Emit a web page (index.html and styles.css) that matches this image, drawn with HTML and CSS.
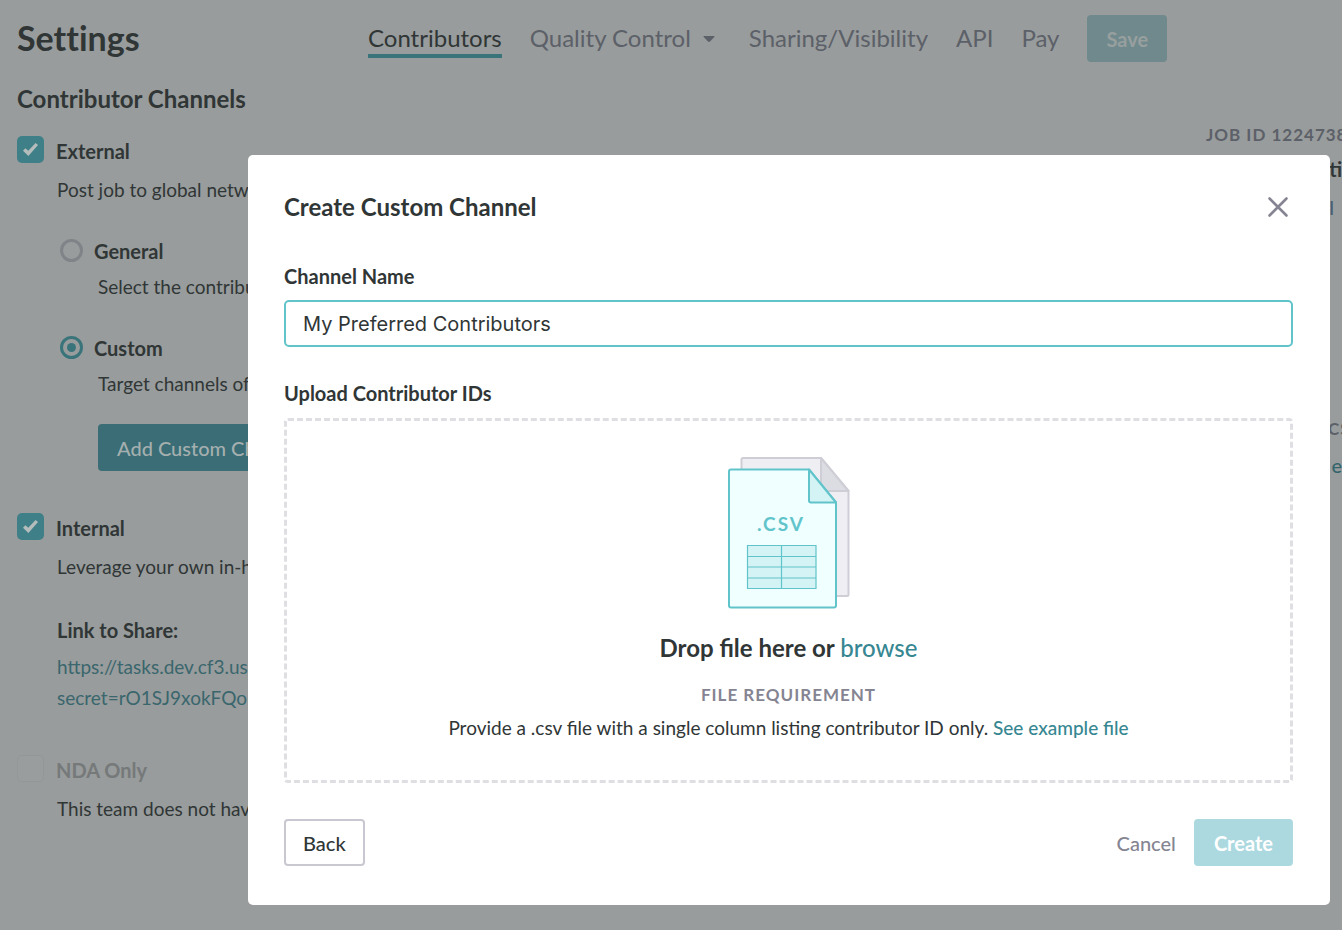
FILE: index.html
```html
<!DOCTYPE html>
<html lang="en">
<head>
<meta charset="utf-8">
<title>Settings</title>
<link rel="stylesheet" href="styles.css">
</head>
<body>
<div class="page">
  <header class="header">
    <h1 class="page-title">Settings</h1>
    <nav class="nav">
      <a class="nav-link active" href="#">Contributors</a>
      <a class="nav-link has-menu" href="#">Quality Control <svg class="caret" width="12" height="6" viewBox="0 0 12 6"><path d="M1 0h10q1 0 .3 1L7 5.500q-1 .8-2 0L.7 1Q0 0 1 0z" fill="currentColor"/></svg></a>
      <a class="nav-link" href="#">Sharing/Visibility</a>
      <a class="nav-link" href="#">API</a>
      <a class="nav-link" href="#">Pay</a>
      <button class="button save" type="button">Save</button>
    </nav>
  </header>
  <div class="columns">
    <main class="channels">
      <h2 class="section-title">Contributor Channels</h2>
      <section class="channel">
        <label class="option"><input class="check" type="checkbox" checked>External</label>
        <p class="note">Post job to global network</p>
        <div class="choices">
          <label class="option choice"><input class="radio" type="radio" name="external">General</label>
          <p class="note choice-note">Select the contributors</p>
          <label class="option choice second"><input class="radio" type="radio" name="external" checked>Custom</label>
          <p class="note choice-note">Target channels of</p>
          <button class="button add" type="button">Add Custom Channel</button>
        </div>
      </section>
      <section class="channel">
        <label class="option"><input class="check" type="checkbox" checked>Internal</label>
        <p class="note">Leverage your own in-house</p>
        <h3 class="share-title">Link to Share:</h3>
        <a class="share-link" href="#">https://tasks.dev.cf3.us<br>secret=rO1SJ9xokFQo</a>
      </section>
      <section class="channel">
        <label class="option disabled"><input class="check" type="checkbox" disabled>NDA Only</label>
        <p class="note">This team does not have</p>
      </section>
    </main>
    <aside class="job">
      <p class="job-label">JOB ID 1224738</p>
      <p class="job-name">ti</p>
      <p class="job-link blue">l</p>
      <p class="job-label metrics">CS</p>
      <a class="job-link" href="#">e</a>
    </aside>
  </div>
</div>

<div class="overlay">
  <form class="modal" role="dialog" aria-labelledby="modal-title">
    <div class="modal-head">
      <h2 class="modal-title" id="modal-title">Create Custom Channel</h2>
      <button class="close" type="button" aria-label="Close"><svg width="22" height="22" viewBox="0 0 22 22"><path d="M2.500 2.500l17 17M19.500 2.500l-17 17" fill="none" stroke="#858492" stroke-width="2.600" stroke-linecap="round"/></svg></button>
    </div>
    <label class="field-label" for="channel-name">Channel Name</label>
    <input class="text-box" id="channel-name" type="text" value="My Preferred Contributors">
    <h3 class="field-label upload">Upload Contributor IDs</h3>
    <div class="dropzone">
      <svg class="csv" width="124" height="153" viewBox="0 0 124 153">
        <g stroke="#cfced6" stroke-width="2" stroke-linejoin="round">
          <path d="M16 2H94L121.500 35V138.500q0 1.500-1.500 1.500H16q-1.500 0-1.500-1.500V3.500Q14.500 2 16 2z" fill="#eeeef3"/>
          <path d="M94 2V35H121.500z" fill="#dcdce3"/>
        </g>
        <g stroke="#62c4cb" stroke-width="2" stroke-linejoin="round">
          <path d="M4 13.500H82L109 46.500V149.500q0 2-2 2H4q-2 0-2-2V15.500q0-2 2-2z" fill="#f0ffff"/>
          <path d="M82 13.500V44.500q0 2 2 2H109z" fill="#d3f3f4"/>
        </g>
        <path d="M20.500 89.500H89V132.500H20.500zM54.500 89.500V132.500M20.500 100.500H89M20.500 111H89M20.500 122H89" fill="#d3f3f4" stroke="#62c4cb" stroke-width="1.200"/>
        <text class="csv-text" x="54" y="75" text-anchor="middle">.CSV</text>
      </svg>
      <p class="drop-title">Drop file here or <a class="link" href="#">browse</a></p>
      <p class="requirement">FILE REQUIREMENT</p>
      <p class="drop-note">Provide a .csv file with a single column listing contributor ID only. <a class="link" href="#">See example file</a></p>
    </div>
    <div class="modal-foot">
      <button class="button back" type="button">Back</button>
      <button class="cancel" type="button">Cancel</button>
      <button class="button create" type="submit">Create</button>
    </div>
  </form>
</div>
</body>
</html>
```
FILE: styles.css
```css
* { box-sizing: border-box; }
body {
  margin: 0;
  background: #989c9c;
  color: #303636;
  font: 20px/28px Lato, "Open Sans", sans-serif;
}
h1, h2, h3, p { margin: 0; }
a { color: inherit; text-decoration: none; }
button, input { font: inherit; margin: 0; }

.page { min-height: 100vh; overflow: hidden; }
.header { display: flex; align-items: center; padding: 15px 17px 0; }
.page-title { width: 351px; font-size: 34px; line-height: 44px; padding-bottom: 2px; font-weight: 700; font-variant-ligatures: none; }
.nav { display: flex; align-items: center; gap: 28px; }
.nav-link { color: #5c6068; font-size: 24px; line-height: 32px; border-bottom: 4px solid transparent; border-top: 2px solid transparent; white-space: nowrap; }
.nav-link.active { color: #303636; border-bottom-color: #3a747b; }
.has-menu { display: flex; align-items: center; gap: 12px; padding-right: 6px; }
.caret { margin-top: 3px; }

.button { height: 47px; padding: 0 19px; border: 0; border-radius: 4px; font-size: 20px; white-space: nowrap; }
.save { background: #70898c; color: #979f9f; font-weight: 700; }

.columns { display: flex; justify-content: space-between; }
.channels { padding: 21px 17px 0; }
.section-title { font-size: 24px; line-height: 32px; font-weight: 700; }
.channel { display: flex; flex-direction: column; align-items: flex-start; padding-top: 21px; }
.channel + .channel { padding-top: 42px; }
.option { display: flex; align-items: center; gap: 12px; font-weight: 700; }
.disabled { color: #76797a; }
.note { padding: 10px 0 0 40px; font-size: 19px; white-space: nowrap; }

.check { appearance: none; width: 27px; height: 27px; margin-bottom: 3px; border-radius: 5px; background: #3f8088; display: grid; place-items: center; }
.check:checked::after { content: ""; width: 15px; height: 13px; background: #b4bcbc; clip-path: polygon(0 59%, 16% 40%, 35% 60%, 84% 0, 100% 16%, 36% 100%); }
.check:disabled { background: #999d9d; border: 1px solid #939797; }

.choices { display: flex; flex-direction: column; align-items: flex-start; padding: 33px 0 0 43px; }
.choice { gap: 11px; }
.second { margin-top: 33px; }
.choice-note { padding: 8px 0 0 38px; }
.radio { appearance: none; width: 23px; height: 23px; margin-bottom: 2px; border: 3px solid #808388; border-radius: 50%; display: grid; place-items: center; }
.radio:checked { border-color: #3a747b; }
.radio:checked::after { content: ""; width: 9px; height: 9px; border-radius: 50%; background: #3a747b; }
.add { margin: 26px 0 0 38px; background: #3a6d75; color: #a5afaf; font-weight: 500; }

.share-title { margin: 35px 0 7px 40px; font-size: 20px; line-height: 28px; font-weight: 700; }
.share-link { margin-left: 40px; color: #3a666d; font-size: 19px; line-height: 31px; }

.job { display: flex; flex-direction: column; width: 136px; padding-top: 59px; white-space: nowrap; }
.job-label { color: #5c6068; font-size: 17px; font-weight: 700; letter-spacing: 1px; }
.job-name { align-self: flex-end; padding-top: 6px; font-weight: 700; }
.job-link { align-self: flex-end; color: #34656c; font-weight: 500; padding-top: 8px; }
.blue { padding: 10px 8px 0 0; color: #4a5e75; }
.metrics { align-self: flex-end; width: 14px; padding-top: 194px; }

.overlay { position: fixed; inset: 0; padding: 155px 12px 0 248px; overflow: hidden; }
.modal { padding: 36px 37px 39px 36px; border-radius: 5px; background: #fff; }
.modal-head { display: flex; align-items: center; justify-content: space-between; margin-bottom: 39px; }
.modal-title { font-size: 24px; line-height: 32px; font-weight: 700; }
.close { display: flex; padding: 0; margin-right: 4px; border: 0; background: none; }
.field-label { display: block; font-size: 20px; line-height: 28px; font-weight: 700; }
.text-box { display: block; width: 100%; height: 47px; margin-top: 10px; padding: 0 17px; border: 2px solid #62c4cb; border-radius: 5px; background: #fff; color: #303636; font-family: Inter, sans-serif; outline: 0; }
.upload { margin-top: 32px; }
.dropzone { display: flex; flex-direction: column; align-items: center; margin-top: 11px; padding: 35px 20px 38px; border: 3px dashed #dedee3; border-radius: 4px; text-align: center; }
.csv { display: block; }
.csv-text { fill: #62c4cb; font: 700 19px Lato, sans-serif; letter-spacing: 2px; }
.drop-title { margin-top: 23px; font-size: 24px; line-height: 32px; font-weight: 700; }
.link { color: #368791; font-weight: 500; }
.requirement { margin-top: 19px; color: #858492; font-size: 17px; line-height: 24px; font-weight: 700; letter-spacing: 1px; }
.drop-note { margin-top: 7px; font-size: 19px; }
.modal-foot { display: flex; align-items: center; gap: 18px; margin-top: 36px; }
.back { margin-right: auto; padding: 0 17px; border: 2px solid #c9c8d0; background: #fff; color: #303636; font-weight: 500; }
.cancel { padding: 0; border: 0; background: none; color: #858492; font-weight: 500; }
.create { padding: 0 20px; background: #acd8df; color: #fff; font-weight: 700; }
```
